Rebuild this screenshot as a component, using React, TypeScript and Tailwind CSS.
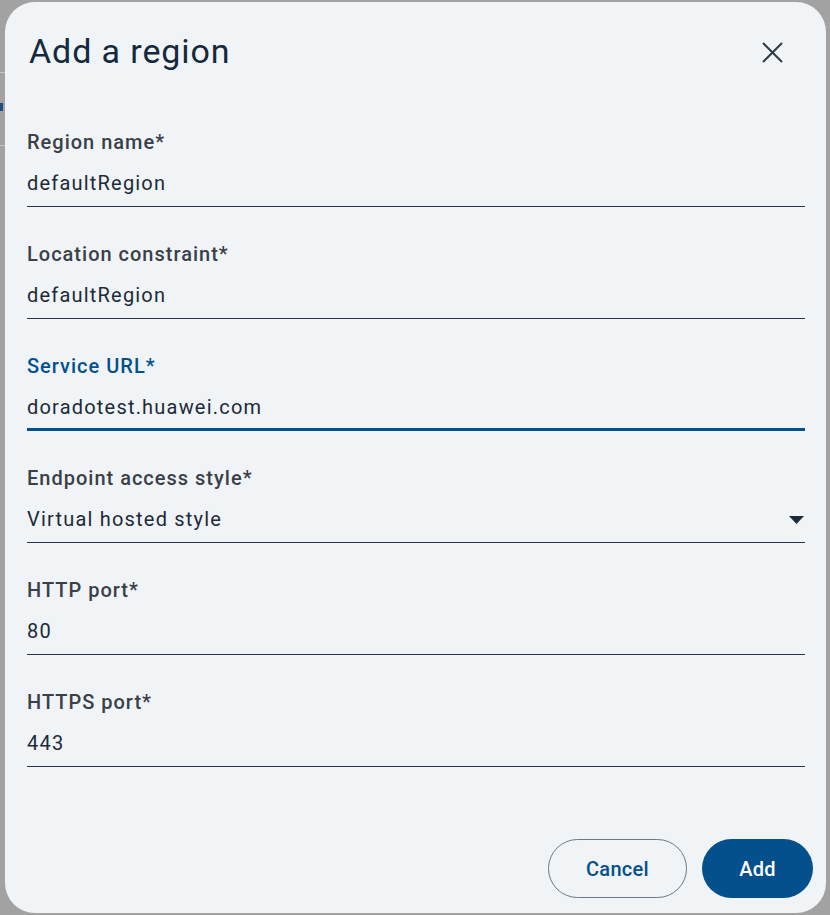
import type { ReactNode } from 'react';

const font = { fontFamily: 'Roboto, "Noto Sans", sans-serif' };

interface FieldProps {
  label: string;
  value: string;
  focused?: boolean;
  trailing?: ReactNode;
}

const Field = ({ label, value, focused = false, trailing }: FieldProps) => (
  <div className="flex flex-col">
    <label
      className={`h-[24px] text-[20px] leading-[24px] font-medium tracking-[1px] ${
        focused ? 'text-[#03508c]' : 'text-[#3a4048]'
      }`}
    >
      {label}
    </label>
    <div
      className={`mt-[15.5px] flex items-center justify-between ${
        focused ? 'border-b-[3px] border-[#03508c] pb-[7px]' : 'border-b border-[#2a3642] pb-[9px]'
      }`}
    >
      <span className="h-[28px] text-[20px] leading-[28px] tracking-[1.2px] text-[#1d2a37]">{value}</span>
      {trailing}
    </div>
  </div>
);

const Caret = () => (
  <svg width="15" height="8" viewBox="0 0 15 8" className="mr-[1px] mt-[2px]">
    <path d="M0 0h15L7.5 8z" fill="#1d2a37" />
  </svg>
);

export default function App() {
  return (
    <div className="relative h-[915px] w-[830px] overflow-hidden bg-[#a2a2a2]" style={font}>
      {/* page underneath the modal, only its edge shows */}
      <div className="flex w-[6px] flex-col">
        <div className="h-[72px]" />
        <div className="h-px bg-[#c4c4c4]" />
        <div className="h-[30px]" />
        <div className="h-[8px] w-[3px] bg-[#1f4f7a]" />
        <div className="h-[34px]" />
        <div className="h-px bg-[#c4c4c4]" />
      </div>

      <div className="absolute left-[5px] top-[2px] flex h-[911px] w-[821px] flex-col rounded-[30px] bg-[#f0f4f7] pt-[29px]">
        <div className="flex items-start justify-between pl-[24px] pr-[43px]">
          <h1 className="h-[40px] text-[34px] leading-[40px] font-normal tracking-[0.9px] text-[#142a3c]">
            Add a region
          </h1>
          <button className="mt-[10px] flex h-[22px] w-[22px] items-center justify-center">
            <svg width="21" height="21" viewBox="0 0 21 21">
              <path d="M1 1l19 19M20 1L1 20" stroke="#2e3944" strokeWidth="2" />
            </svg>
          </button>
        </div>

        <div className="mt-[58.5px] flex flex-col gap-[34.5px] pl-[22px] pr-[21px]">
          <Field label="Region name*" value="defaultRegion" />
          <Field label="Location constraint*" value="defaultRegion" />
          <Field label="Service URL*" value="doradotest.huawei.com" focused />
          <Field label="Endpoint access style*" value="Virtual hosted style" trailing={<Caret />} />
          <Field label="HTTP port*" value="80" />
          <Field label="HTTPS port*" value="443" />
        </div>

        <div className="flex-1" />

        <div className="flex justify-end gap-[15px] pb-[15px] pr-[13px]">
          <button className="h-[59px] w-[139px] rounded-full border border-[#6c7886] text-[20px] font-medium tracking-[0.3px] text-[#03508c]">
            Cancel
          </button>
          <button className="h-[59px] w-[111px] rounded-full bg-[#03508c] text-[20px] font-medium tracking-[0.3px] text-white">
            Add
          </button>
        </div>
      </div>
    </div>
  );
}
